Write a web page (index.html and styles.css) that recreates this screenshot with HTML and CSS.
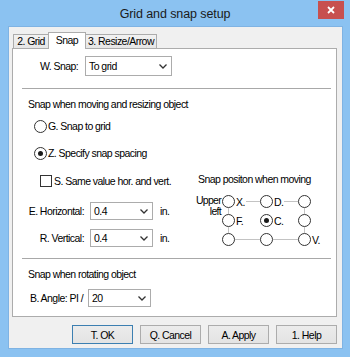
FILE: index.html
```html
<!DOCTYPE html>
<html>
<head>
  <link rel="stylesheet" href="styles.css">
</head>
<body>
  <div class="window">
    <div class="titlebar">
      <span class="title">Grid and snap setup</span>
      <div class="close">
        <svg width="8" height="8" viewBox="0 0 8 8"><path d="M1 1L7 7M7 1L1 7" stroke="#fff" stroke-width="1.8"/></svg>
      </div>
    </div>

    <div class="client">
      <div class="tabs">
        <div class="tab grid-tab">2. Grid</div>
        <div class="tab active">Snap</div>
        <div class="tab resize-tab">3. Resize/Arrow</div>
      </div>

      <div class="panel">
        <div class="snap-row">
          <span class="snap-label">W. Snap:</span>
          <div class="select wide">
            <span>To grid</span>
            <svg class="chev" width="8" height="5" viewBox="0 0 8 5"><path d="M0.5 0.5L4 4L7.5 0.5" fill="none" stroke="#333" stroke-width="1.3"/></svg>
          </div>
        </div>

        <div class="sep"></div>
        <div class="heading">Snap when moving and resizing object</div>
        <div class="opt opt-g"><span class="radio"></span>G. Snap to grid</div>
        <div class="opt opt-z"><span class="radio on"></span>Z. Specify snap spacing</div>

        <div class="middle">
          <div class="left-col">
            <div class="check-row"><span class="check"></span>S. Same value hor. and vert.</div>
            <div class="field field-h">
              <span class="field-label">E. Horizontal:</span>
              <div class="select small">
                <span>0.4</span>
                <svg class="chev" width="8" height="5" viewBox="0 0 8 5"><path d="M0.5 0.5L4 4L7.5 0.5" fill="none" stroke="#333" stroke-width="1.3"/></svg>
              </div>
              <span class="unit">in.</span>
            </div>
            <div class="field field-v">
              <span class="field-label">R. Vertical:</span>
              <div class="select small">
                <span>0.4</span>
                <svg class="chev" width="8" height="5" viewBox="0 0 8 5"><path d="M0.5 0.5L4 4L7.5 0.5" fill="none" stroke="#333" stroke-width="1.3"/></svg>
              </div>
              <span class="unit">in.</span>
            </div>
          </div>

          <div class="right-col">
            <div class="pos-title">Snap positon when moving</div>
            <div class="pos">
              <div class="corner">Upper<br>left</div>
              <div class="pos-grid">
                <!-- connector lines behind the radio buttons -->
                <svg class="links" width="90" height="57" viewBox="0 0 90 57">
                  <g stroke="#c3c3c3" stroke-width="1">
                    <path d="M24 9.5H38M62 9.5H76"/>
                    <path d="M13 47.5H38M51 47.5H76"/>
                    <path d="M6.5 16V22M6.5 35V41"/>
                    <path d="M82.5 16V22M82.5 35V41"/>
                  </g>
                </svg>
                <div class="cell"><span class="radio"></span>X.</div>
                <div class="cell"><span class="radio"></span>D.</div>
                <div class="cell"><span class="radio"></span></div>
                <div class="cell"><span class="radio"></span>F.</div>
                <div class="cell"><span class="radio on"></span>C.</div>
                <div class="cell"><span class="radio"></span></div>
                <div class="cell"><span class="radio"></span></div>
                <div class="cell"><span class="radio"></span></div>
                <div class="cell"><span class="radio"></span>V.</div>
              </div>
            </div>
          </div>
        </div>

        <div class="sep sep-low"></div>
        <div class="heading">Snap when rotating object</div>
        <div class="field angle">
          <span class="angle-label">B. Angle: PI /</span>
          <div class="select small">
            <span>20</span>
            <svg class="chev" width="8" height="5" viewBox="0 0 8 5"><path d="M0.5 0.5L4 4L7.5 0.5" fill="none" stroke="#333" stroke-width="1.3"/></svg>
          </div>
        </div>
      </div>

      <div class="buttons">
        <button class="default">T. OK</button>
        <button>Q. Cancel</button>
        <button>A. Apply</button>
        <button>1. Help</button>
      </div>
    </div>
  </div>
</body>
</html>
```

FILE: styles.css
```css
body {
  margin: 0;
  font-family: "Liberation Sans", sans-serif;
  font-size: 10.5px;
  letter-spacing: -0.55px;
  color: #000;
}

.window {
  position: relative;
  width: 350px;
  height: 357px;
  background: #8bc2f1;
  display: flex;
  flex-direction: column;
}

.titlebar {
  height: 26px;
  display: flex;
  align-items: center;
  justify-content: center;
}

.title {
  font-size: 12.5px;
  letter-spacing: -0.1px;
  color: #1a1a1a;
  margin-top: 2px;
}

.close {
  position: absolute;
  top: 1px;
  left: 318px;
  width: 26px;
  height: 18px;
  background: #c7504f;
  display: flex;
  align-items: center;
  justify-content: center;
}

.client {
  box-sizing: border-box;
  height: 323px;
  margin: 0 7px 0 8px;
  padding-top: 5px;
  background: #f0f0f0;
  border: 1px solid #7fb3e3;
  display: flex;
  flex-direction: column;
}

/* tabs */
.tabs {
  display: flex;
  align-items: flex-end;
  height: 17px;
  margin: 0 0 -1px 4px;
  position: relative;
  z-index: 1;
}

.tab {
  box-sizing: border-box;
  height: 14px;
  margin-bottom: 1px;
  line-height: 13px;
  text-align: center;
  white-space: nowrap;
  background: linear-gradient(#f2f2f2, #e6e6e6);
  border: 1px solid #acacac;
  border-bottom: none;
}

.grid-tab {
  width: 35px;
  border-right: none;
}

.resize-tab {
  width: 71px;
}

.tab.active {
  width: 38px;
  height: 17px;
  margin-bottom: 0;
  background: #fff;
  line-height: 14px;
}

.tab.active + .tab {
  border-left: none;
}

/* panel */
.panel {
  box-sizing: border-box;
  height: 269px;
  margin: 0 5px 0 3px;
  padding-top: 7px;
  background: #fff;
  border: 1px solid #acacac;
  white-space: nowrap;
}

.snap-row {
  display: flex;
  align-items: center;
  height: 20px;
  padding-left: 27px;
}

.snap-label {
  width: 45px;
}

.select {
  box-sizing: border-box;
  display: flex;
  align-items: center;
  justify-content: space-between;
  padding: 0 4px 0 3px;
  background: #fff;
  border: 1px solid #acacac;
}

.select.wide {
  width: 87px;
  height: 20px;
}

.select.small {
  width: 63px;
  height: 18px;
}

.sep {
  height: 1px;
  margin: 12px 5px 0 9px;
  background: #a8a8a8;
}

.sep-low {
  margin-top: 9px;
}

.heading {
  height: 14px;
  line-height: 14px;
  margin-top: 8px;
  padding-left: 15px;
}

.opt {
  display: flex;
  align-items: center;
  height: 14px;
  padding-left: 21px;
}

.opt-g {
  margin-top: 8px;
}

.opt-z {
  margin-top: 13px;
}

.radio {
  box-sizing: border-box;
  width: 13px;
  height: 13px;
  margin-right: 1px;
  border: 1px solid #333;
  border-radius: 50%;
  background: #fff;
  display: flex;
  align-items: center;
  justify-content: center;
  flex-shrink: 0;
}

.radio.on::after {
  content: "";
  width: 5px;
  height: 5px;
  border-radius: 50%;
  background: #1a1a1a;
}

.middle {
  display: flex;
  margin-top: 10px;
}

.left-col {
  width: 183px;
}

.check-row {
  display: flex;
  align-items: center;
  height: 14px;
  margin-top: 4px;
  padding-left: 27px;
}

.check {
  box-sizing: border-box;
  width: 12px;
  height: 12px;
  margin-right: 2px;
  border: 1px solid #333;
  background: #fff;
}

.field {
  display: flex;
  align-items: center;
  height: 18px;
}

.field-h {
  margin-top: 14px;
}

.field-v {
  margin-top: 9px;
}

.field-label {
  width: 71px;
  text-align: right;
  margin-right: 6px;
}

.unit {
  margin-left: 7px;
}

.pos-title {
  height: 14px;
  line-height: 14px;
  margin: 2px 0 0 2px;
}

.pos {
  display: flex;
  margin-top: 6px;
}

.corner {
  width: 27px;
  margin: 3px 1px 0 -2px;
  line-height: 11px;
  text-align: right;
  letter-spacing: -0.7px;
}

.pos-grid {
  position: relative;
  display: grid;
  grid-template-columns: repeat(3, 38px);
  grid-auto-rows: 19px;
}

.links {
  position: absolute;
  left: 0;
  top: 0;
}

.cell {
  position: relative;
  display: flex;
  align-items: center;
}

.angle {
  margin-top: 8px;
  padding-left: 17px;
}

.angle-label {
  width: 58px;
}

/* dialog buttons */
.buttons {
  display: flex;
  justify-content: flex-end;
  gap: 7px;
  margin: 8px 5px 0 0;
}

button {
  box-sizing: border-box;
  width: 61px;
  height: 19px;
  padding: 0;
  font-family: inherit;
  font-size: 10.5px;
  letter-spacing: -0.55px;
  color: #000;
  background: linear-gradient(#ececec, #e3e3e3);
  border: 1px solid #acacac;
}

button.default {
  border-color: #3c7fb1;
}
```
